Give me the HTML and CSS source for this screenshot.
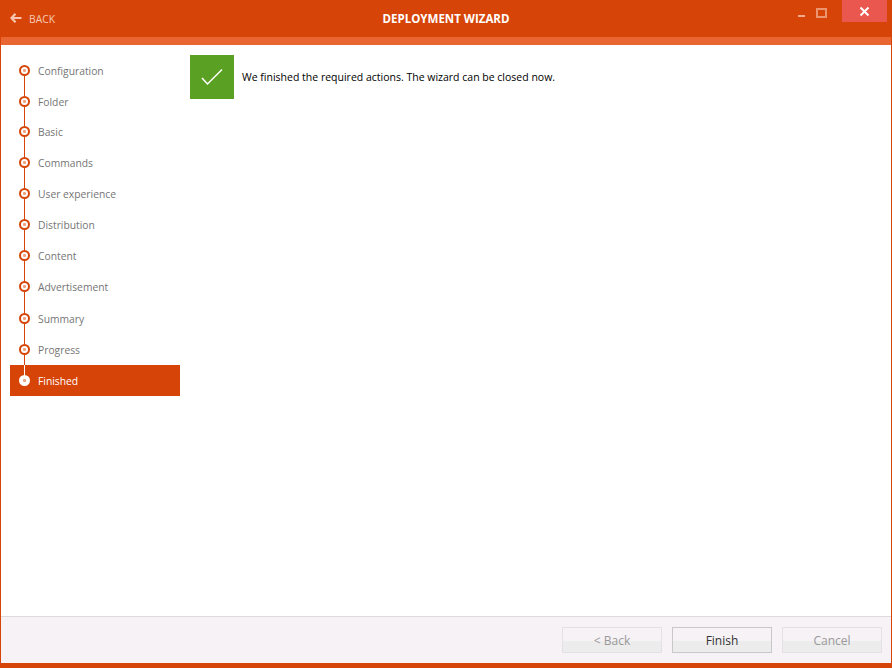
FILE: index.html
```html
<!DOCTYPE html>
<html lang="en">
<head>
<meta charset="utf-8">
<title>Deployment Wizard</title>
<link rel="stylesheet" href="styles.css">
</head>
<body>
<div class="window">
  <header class="titlebar">
    <div class="back">
      <svg class="back-icon" width="12" height="10" viewBox="0 0 12 10"><path d="M5.500 .8 1.500 5l4 4.200M2 5h9.500" fill="none" stroke="#f8c6ae" stroke-width="2.200"/></svg>
      <span>BACK</span>
    </div>
    <div class="title">DEPLOYMENT WIZARD</div>
    <div class="controls">
      <span class="min"></span>
      <span class="max"></span>
      <span class="close"><svg width="11" height="11" viewBox="0 0 11 11"><path d="M1.500 1.500l8 8M9.500 1.500l-8 8" stroke="#fff" stroke-width="2" fill="none"/></svg></span>
    </div>
  </header>
  <div class="strip"></div>
  <main class="main">
    <nav class="steps">
      <div class="step first"><i class="dot"></i><span>Configuration</span></div>
      <div class="step short"><i class="dot"></i><span>Folder</span></div>
      <div class="step"><i class="dot"></i><span>Basic</span></div>
      <div class="step"><i class="dot"></i><span>Commands</span></div>
      <div class="step"><i class="dot"></i><span>User experience</span></div>
      <div class="step"><i class="dot"></i><span>Distribution</span></div>
      <div class="step"><i class="dot"></i><span>Content</span></div>
      <div class="step tall"><i class="dot"></i><span>Advertisement</span></div>
      <div class="step"><i class="dot"></i><span>Summary</span></div>
      <div class="step"><i class="dot"></i><span>Progress</span></div>
      <div class="step active"><i class="dot"></i><span>Finished</span></div>
    </nav>
    <section class="content">
      <div class="tile"><svg width="24" height="20" viewBox="0 0 24 20"><path d="M2 11 7.500 17 22 2.500" fill="none" stroke="#fff" stroke-width="1.500"/></svg></div>
      <p class="message">We finished the required actions. The wizard can be closed now.</p>
    </section>
  </main>
  <footer class="footer">
    <button class="btn" disabled>&lt; Back</button>
    <button class="btn primary">Finish</button>
    <button class="btn" disabled>Cancel</button>
  </footer>
</div>
</body>
</html>
```
FILE: styles.css
```css
* { box-sizing: border-box; }
html, body { margin: 0; height: 100%; overflow: hidden; }
body { font-family: "Open Sans", "Noto Sans", "Liberation Sans", sans-serif; font-size: 10.5px; background: #fff; }
.window { height: 668px; display: flex; flex-direction: column; border-left: 1px solid #d64507; border-right: 1px solid #d64507; border-bottom: 5px solid #d64507; }
.titlebar { height: 37px; background: #d64507; display: flex; position: relative; align-items: center; flex: none; }
.back { display: flex; align-items: center; gap: 7px; padding-left: 9px; color: #f6c9b4; font-size: 10.3px; }
.back-icon { margin-top: -1px; }
.title { position: absolute; left: 0; right: 0; text-align: center; color: #fff; font-weight: 700; font-size: 11.5px; }
.controls { position: absolute; top: 0; right: 4px; display: flex; align-items: flex-start; }
.min { width: 7px; height: 2px; background: #f3a988; margin: 15px 11px 0 0; }
.max { width: 11px; height: 10px; border: 2px solid #ec9470; margin: 8px 15px 0 0; }
.close { width: 45px; height: 22px; background: #e9574e; display: flex; align-items: center; justify-content: center; }
.strip { height: 8px; background: #e96633; flex: none; }
.main { flex: 1; display: flex; min-height: 0; background: #fff; }
.steps { width: 170px; margin: 10px 0 0 9px; flex: none; }
.step { height: 31px; display: flex; align-items: center; padding-left: 28px; color: #757575; position: relative; font-size: 10.3px; }
.step.short { margin-bottom: -1px; }
.step.tall { margin-bottom: 1px; }
.step::before { content: ""; position: absolute; left: 14px; top: -16px; height: 31px; width: 1px; background: #d64507; }
.step.first::before { display: none; }
.dot { position: absolute; left: 9px; top: 10px; width: 11px; height: 11px; border: 2px solid #d64507; border-radius: 50%; background: radial-gradient(circle, #eda282 0 1.200px, #fff 2px); z-index: 1; }
.step.active { background: #d64507; color: #fff; }
.step.active::before { background: #fff; top: 0; height: 15px; }
.step.active::after { content: ""; position: absolute; left: 14px; top: -16px; height: 16px; width: 1px; background: #d64507; }
.step.active .dot { border-color: #fff; }
.content { display: flex; align-items: flex-start; margin: 10px 0 0 10px; }
.tile { width: 44px; height: 44px; background: #5aa023; display: flex; align-items: center; justify-content: center; flex: none; }
.message { margin: 15px 0 0 8px; color: #000; }
.footer { height: 47px; flex: none; background: #f6f2f6; border-top: 1px solid #dcdadb; display: flex; justify-content: flex-end; align-items: center; gap: 10px; padding: 0 9px 0 0; }
.btn { width: 100px; height: 26px; font: inherit; font-size: 12px; padding: 0; border: 1px solid #c8c8c8; background: linear-gradient(#f6f2f6 0 55%, #ececec 55%); color: #333; }
.btn:disabled { border-color: #e3e1e3; color: #999; }
```
